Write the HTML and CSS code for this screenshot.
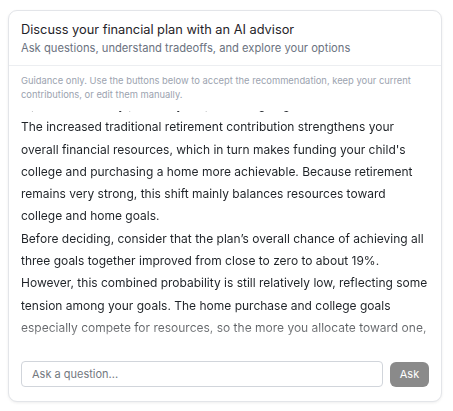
FILE: index.html
```html
<!DOCTYPE html>
<html>
<head>
<meta charset="utf-8">
<link rel="stylesheet" href="styles.css">
</head>
<body>
<div class="card">
  <div class="card-header">
    <div class="title">Discuss your financial plan with an AI advisor</div>
    <div class="subtitle">Ask questions, understand tradeoffs, and explore your options</div>
  </div>
  <div class="card-body">
    <p class="guidance">Guidance only. Use the buttons below to accept the recommendation, keep your current contributions, or edit them manually.</p>
    <div class="messages">
      <div class="messages-inner">
        <p>a practical, steady path for your priorities going forward.</p>
        <p>The increased traditional retirement contribution strengthens your overall financial resources, which in turn makes funding your child's college and purchasing a home more achievable. Because retirement remains very strong, this shift mainly balances resources toward college and home goals.</p>
        <p>Before deciding, consider that the plan’s overall chance of achieving all three goals together improved from close to zero to about 19%. However, this combined probability is still relatively low, reflecting some tension among your goals. The home purchase and college goals especially compete for resources, so the more you allocate toward one, the less remains for the other.</p>
      </div>
    </div>
  </div>
  <form class="ask-row">
    <input class="ask-input" type="text" placeholder="Ask a question...">
    <button class="ask-btn" type="button">Ask</button>
  </form>
</div>
</body>
</html>
```
FILE: styles.css
```css
html, body {
  margin: 0;
  padding: 0;
  background: #ffffff;
}
body {
  padding: 10px 11px 8px 8px;
  font-family: Inter, "Noto Sans", sans-serif;
  color: #1f2328;
}
.card {
  width: 434px;
  height: 392px;
  box-sizing: border-box;
  border: 1px solid #e3e5e9;
  border-radius: 9px;
  box-shadow: 0 1px 3px rgba(0, 0, 0, 0.07);
  display: flex;
  flex-direction: column;
  overflow: hidden;
  background: #fff;
}
.card-header {
  padding: 10px 12px 8px;
  border-bottom: 1px solid #eceef1;
}
.title {
  font-size: 12.8px;
  line-height: 18px;
  color: #1f2328;
}
.subtitle {
  font-size: 11.2px;
  line-height: 18px;
  color: #6b7280;
}
.card-body {
  padding: 8px 12px 0;
  display: flex;
  flex-direction: column;
}
.guidance {
  margin: 0;
  font-size: 9.4px;
  line-height: 14px;
  color: #9ca3af;
}
.messages {
  margin-top: 9px;
  height: 229px;
  overflow: hidden;
  -webkit-mask-image: linear-gradient(to bottom, #000 calc(100% - 26px), rgba(0, 0, 0, 0.4) 100%);
  mask-image: linear-gradient(to bottom, #000 calc(100% - 26px), rgba(0, 0, 0, 0.4) 100%);
}
.messages-inner {
  margin-top: -17px;
}
.messages p {
  margin: 0;
  font-size: 12px;
  line-height: 22.3px;
  color: #1f2328;
}
.ask-row {
  margin: auto 0 0;
  padding: 0 12px 14px;
  display: flex;
  gap: 7px;
  align-items: center;
}
.ask-input {
  flex: 1;
  height: 26px;
  box-sizing: border-box;
  border: 1px solid #d1d5db;
  border-radius: 4px;
  padding: 0 10px;
  font-family: Inter, "Noto Sans", sans-serif;
  font-size: 11px;
  color: #1f2328;
  outline: none;
  background: #fff;
}
.ask-input::placeholder {
  color: #737880;
}
.ask-btn {
  width: 39px;
  height: 25px;
  border: none;
  border-radius: 6px;
  background: #8a8a8a;
  color: #ffffff;
  font-family: Inter, "Noto Sans", sans-serif;
  font-size: 11px;
  padding: 0;
}
```
